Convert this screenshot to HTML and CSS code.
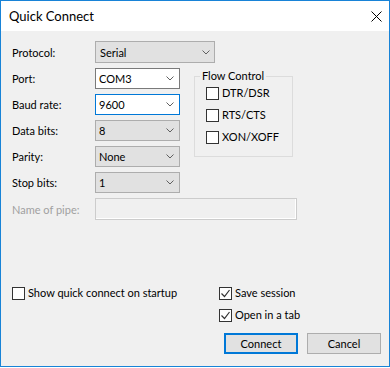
FILE: index.html
```html
<!DOCTYPE html>
<html>
<head>
<meta charset="utf-8">
<link rel="stylesheet" href="styles.css">
</head>
<body>
<div class="window">
  <div class="titlebar">
    <span class="title">Quick Connect</span>
    <svg class="close" width="11" height="11" viewBox="0 0 11 11"><path d="M0.5 0.5L10.5 10.5M10.5 0.5L0.5 10.5" stroke="#000" stroke-width="1" fill="none"/></svg>
  </div>
  <div class="body">
    <div class="form">
      <span class="label r1">Protocol:</span>
      <div class="combo gray wide r1"><span>Serial</span><svg class="chev" width="8" height="5" viewBox="0 0 8 5"><path d="M0.5 0.5L4 4L7.5 0.5" stroke="#606060" fill="none"/></svg></div>

      <span class="label r2">Port:</span>
      <div class="combo white r2"><span>COM3</span><svg class="chev" width="8" height="5" viewBox="0 0 8 5"><path d="M0.5 0.5L4 4L7.5 0.5" stroke="#606060" fill="none"/></svg></div>

      <span class="label r3">Baud rate:</span>
      <div class="combo white focus r3"><span>9600</span><svg class="chev" width="8" height="5" viewBox="0 0 8 5"><path d="M0.5 0.5L4 4L7.5 0.5" stroke="#606060" fill="none"/></svg></div>

      <span class="label r4">Data bits:</span>
      <div class="combo gray r4"><span>8</span><svg class="chev" width="8" height="5" viewBox="0 0 8 5"><path d="M0.5 0.5L4 4L7.5 0.5" stroke="#606060" fill="none"/></svg></div>

      <span class="label r5">Parity:</span>
      <div class="combo gray r5"><span>None</span><svg class="chev" width="8" height="5" viewBox="0 0 8 5"><path d="M0.5 0.5L4 4L7.5 0.5" stroke="#606060" fill="none"/></svg></div>

      <span class="label r6">Stop bits:</span>
      <div class="combo gray r6"><span>1</span><svg class="chev" width="8" height="5" viewBox="0 0 8 5"><path d="M0.5 0.5L4 4L7.5 0.5" stroke="#606060" fill="none"/></svg></div>

      <span class="label disabled r7">Name of pipe:</span>
      <div class="textbox r7"></div>

      <fieldset class="group">
        <legend>Flow Control</legend>
        <label class="check"><span class="box"></span>DTR/DSR</label>
        <label class="check"><span class="box"></span>RTS/CTS</label>
        <label class="check"><span class="box"></span>XON/XOFF</label>
      </fieldset>
    </div>

    <div class="bottom">
      <label class="check startup"><span class="box"></span>Show quick connect on startup</label>
      <div class="right">
        <label class="check"><span class="box"><svg width="11" height="11" viewBox="0 0 11 11"><path d="M1.5 5.5L4.5 8.5L9.5 2" stroke="#333" stroke-width="1.2" fill="none"/></svg></span>Save session</label>
        <label class="check"><span class="box"><svg width="11" height="11" viewBox="0 0 11 11"><path d="M1.5 5.5L4.5 8.5L9.5 2" stroke="#333" stroke-width="1.2" fill="none"/></svg></span>Open in a tab</label>
        <div class="buttons">
          <button class="btn default">Connect</button>
          <button class="btn">Cancel</button>
        </div>
      </div>
    </div>
  </div>
</div>
</body>
</html>
```
FILE: styles.css
```css
* { box-sizing: border-box; }
html, body { margin: 0; padding: 0; background: #ffffff; }
body {
  font-family: Lato, "Liberation Sans", sans-serif;
  font-size: 11px;
  color: #000;
}
.window {
  width: 390px;
  height: 367px;
  border: 1px solid #1883d7;
  display: flex;
  flex-direction: column;
  background: #f0f0f0;
}
.titlebar {
  height: 30px;
  background: #fff;
  display: flex;
  align-items: center;
  justify-content: space-between;
  padding: 0 7px 0 8px;
  flex: none;
}
.title { font-size: 13px; line-height: 16px; margin-top: -1px; }
.close { margin-top: 0; }
.body {
  flex: 1;
  display: flex;
  flex-direction: column;
  padding: 10px 0 12px 11px;
}
.form {
  display: grid;
  grid-template-columns: 83px 85px 14px 99px;
  grid-template-rows: 22px 21px 21px 21px 21px 21px 22px;
  row-gap: 5px;
}
.label { grid-column: 1; align-self: center; white-space: nowrap; }
.label.disabled { color: #a0a0a0; }
.r1 { grid-row: 1; } .r2 { grid-row: 2; } .r3 { grid-row: 3; } .r4 { grid-row: 4; }
.r5 { grid-row: 5; } .r6 { grid-row: 6; } .r7 { grid-row: 7; }
.combo {
  grid-column: 2;
  display: flex;
  align-items: center;
  justify-content: space-between;
  padding: 0 5px 0 3px;
  border: 1px solid #adadad;
  background: #e1e1e1;
}
.combo.wide { grid-column: 2 / 5; width: 120px; padding-left: 4px; padding-right: 4px; }
.combo.white { background: #fff; border-color: #7a7a7a; }
.combo.focus { border-color: #0078d7; }
.chev { flex: none; }
.textbox {
  grid-column: 2 / 5;
  width: 202px;
  border: 1px solid #cccccc;
  box-shadow: inset -1px -1px 0 #ffffff;
  background: #f0f0f0;
}
.group {
  grid-column: 4;
  grid-row: 2 / 6;
  align-self: start;
  margin: 1px 0 0 0;
  padding: 3px 0 0 11px;
  height: 88px;
  border: 1px solid #dcdcdc;
  min-width: 0;
  display: flex;
  flex-direction: column;
  gap: 8px;
}
.group legend { padding: 0 2px; margin-left: -6px; line-height: 14px; }
.check {
  display: flex;
  align-items: center;
  gap: 3px;
  line-height: 14px;
  white-space: nowrap;
}
.box {
  width: 13px;
  height: 13px;
  border: 1px solid #333;
  background: #fff;
  flex: none;
  display: flex;
  align-items: center;
  justify-content: center;
}
.bottom {
  margin-top: auto;
  display: flex;
  align-items: flex-start;
}
.startup { width: 207px; }
.right {
  display: flex;
  flex-direction: column;
  gap: 8px;
}
.buttons {
  display: flex;
  gap: 9px;
  margin-left: 5px;
  margin-top: 3px;
}
.btn {
  width: 74px;
  height: 21px;
  font: inherit;
  color: #000;
  background: #e1e1e1;
  border: 1px solid #adadad;
  padding: 0;
}
.btn.default { border: 2px solid #0078d7; }
```
